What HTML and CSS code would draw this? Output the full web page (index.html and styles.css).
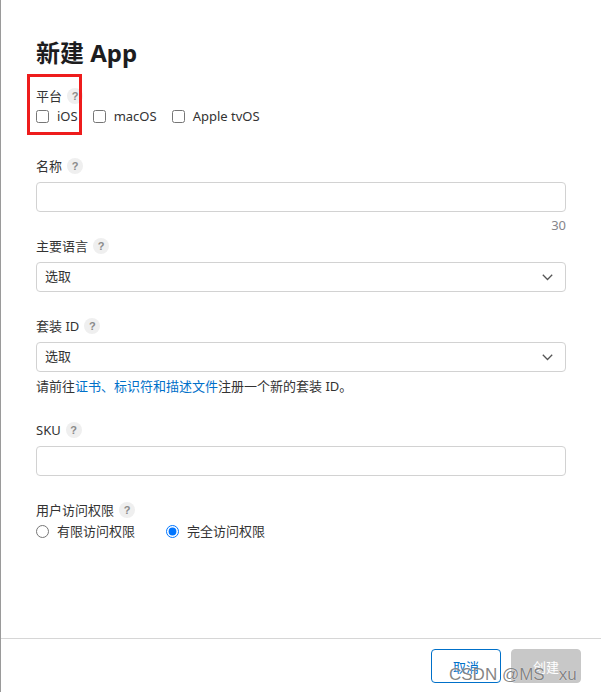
FILE: index.html
```html
<!DOCTYPE html>
<html lang="zh-CN">
<head>
<meta charset="utf-8">
<title>新建 App</title>
<link rel="stylesheet" href="styles.css">
</head>
<body>
<div class="modal">
  <div class="content">
    <h1 class="title">新建 App</h1>

    <div class="field field-platform">
      <div class="label">平台<span class="help">?</span></div>
      <div class="checks">
        <label class="opt"><input type="checkbox"><span>iOS</span></label>
        <label class="opt"><input type="checkbox"><span>macOS</span></label>
        <label class="opt"><input type="checkbox"><span>Apple tvOS</span></label>
      </div>
    </div>

    <div class="field field-name">
      <div class="label">名称<span class="help">?</span></div>
      <div class="input"></div>
      <div class="counter">30</div>
    </div>

    <div class="field field-lang">
      <div class="label">主要语言<span class="help">?</span></div>
      <div class="input select"><span class="select-text">选取</span>
        <svg class="chev" width="11" height="7" viewBox="0 0 11 7"><polyline points="0.8,0.8 5.5,5.5 10.2,0.8" fill="none" stroke="#555" stroke-width="1.3"/></svg>
      </div>
    </div>

    <div class="field field-bundle">
      <div class="label">套装 ID<span class="help">?</span></div>
      <div class="input select"><span class="select-text">选取</span>
        <svg class="chev" width="11" height="7" viewBox="0 0 11 7"><polyline points="0.8,0.8 5.5,5.5 10.2,0.8" fill="none" stroke="#555" stroke-width="1.3"/></svg>
      </div>
      <p class="hint">请前往<a class="link">证书、标识符和描述文件</a>注册一个新的套装 ID。</p>
    </div>

    <div class="field field-sku">
      <div class="label">SKU<span class="help">?</span></div>
      <div class="input"></div>
    </div>

    <div class="field field-access">
      <div class="label">用户访问权限<span class="help">?</span></div>
      <div class="radios">
        <label class="opt"><input type="radio" name="access"><span>有限访问权限</span></label>
        <label class="opt"><input type="radio" name="access" checked><span>完全访问权限</span></label>
      </div>
    </div>
  </div>

  <div class="footer">
    <button class="btn btn-cancel">取消</button>
    <button class="btn btn-create">创建</button>
  </div>

  <div class="highlight"></div>
  <div class="watermark">CSDN @MS   xu</div>
</div>
</body>
</html>
```

FILE: styles.css
```css
* { box-sizing: border-box; }

html, body {
  margin: 0;
  padding: 0;
  background: #ffffff;
}

body {
  font-family: "Noto Sans", "Noto Sans CJK SC", sans-serif;
  font-size: 13px;
  color: #333333;
}

.modal {
  position: relative;
  height: 692px;
  border-left: 1px solid #9a9a9a;
  display: flex;
  flex-direction: column;
}

.content {
  flex: 1;
  padding: 38px 35px 0 35px;
}

.title {
  margin: 0;
  font-size: 24px;
  line-height: 30px;
  font-weight: 700;
  color: #1d1d1f;
}

.field { margin-top: 24px; }
.field-platform { margin-top: 18px; }
.field-name { margin-top: 30px; }
.field-lang { margin-top: 0; }

.label {
  display: flex;
  align-items: center;
  line-height: 20px;
  height: 20px;
  margin-bottom: 6px;
}
.field-platform .label,
.field-access .label { margin-bottom: 0; }

.help {
  display: inline-flex;
  align-items: center;
  justify-content: center;
  width: 16px;
  height: 16px;
  margin-left: 5px;
  border-radius: 50%;
  background: #efefef;
  color: #8a8a8a;
  font-family: "Liberation Sans", Arial, sans-serif;
  font-size: 11px;
  font-weight: 700;
  line-height: 16px;
}

.checks, .radios {
  display: flex;
  align-items: center;
  height: 20px;
}
.checks { gap: 15px; }
.radios { gap: 31px; margin-top: 1px; }

.opt {
  display: flex;
  align-items: center;
  gap: 8px;
  line-height: 20px;
}
.opt input {
  margin: 0;
  width: 13px;
  height: 13px;
}

.input {
  height: 30px;
  border: 1px solid #d2d2d2;
  border-radius: 4px;
  background: #fff;
}

.select {
  display: flex;
  align-items: center;
  justify-content: space-between;
  padding: 0 12px 0 8px;
  color: #333;
}
.select-text {
  line-height: 18px;
  height: 18px;
  margin-top: -2px;
}

.counter {
  margin-top: 3px;
  margin-bottom: 1px;
  line-height: 20px;
  text-align: right;
  color: #86868b;
}

.hint {
  margin: 4px 0 0;
  line-height: 20px;
}
.link { color: #0070c9; }

.footer {
  height: 54px;
  border-top: 1px solid #d6d6d6;
  display: flex;
  justify-content: flex-end;
  align-items: flex-start;
  gap: 10px;
  padding: 10px 20px 0 0;
}

.btn {
  width: 70px;
  height: 34px;
  border-radius: 4px;
  font-family: "Noto Sans", "Noto Sans CJK SC", sans-serif;
  font-size: 13px;
  padding: 0;
}
.btn-cancel {
  border: 1px solid #0070c9;
  background: #fff;
  color: #0070c9;
}
.btn-create {
  border: 1px solid #c8c8c8;
  background: #c8c8c8;
  color: #ffffff;
}

.highlight {
  position: absolute;
  left: 26px;
  top: 74px;
  width: 55px;
  height: 61px;
  border: 3px solid #ee1c1c;
}

.watermark {
  position: absolute;
  left: 448px;
  top: 665px;
  white-space: pre;
  font-family: "Liberation Sans", Arial, sans-serif;
  font-size: 17px;
  line-height: 20px;
  color: rgba(110, 110, 110, 0.85);
  text-shadow: 0 0 1px #fff;
  pointer-events: none;
}
```
